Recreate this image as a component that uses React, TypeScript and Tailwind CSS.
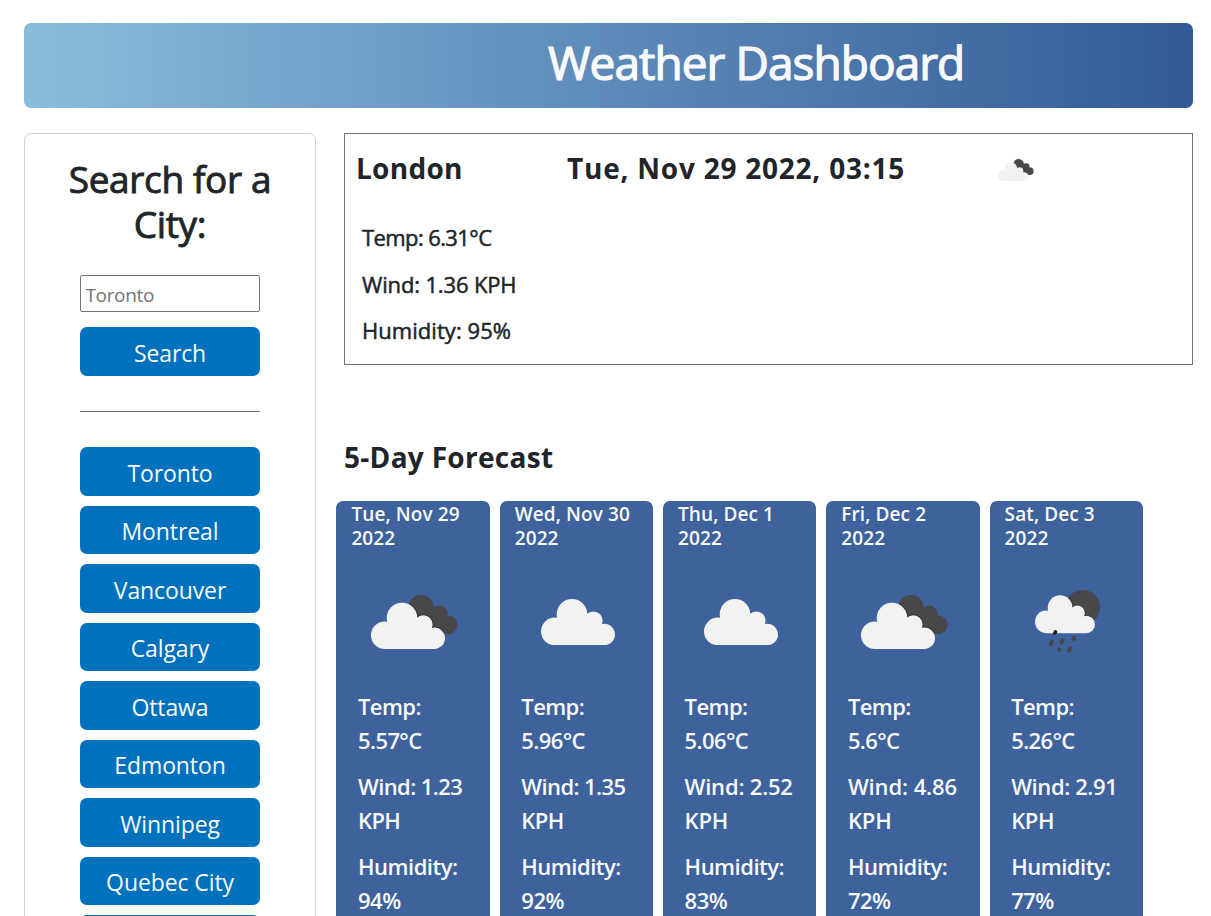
const cities = ["Toronto", "Montreal", "Vancouver", "Calgary", "Ottawa", "Edmonton", "Winnipeg", "Quebec City", "Halifax"];

type Icon = "broken" | "cloud" | "rain";
type Day = { date: string; icon: Icon; temp: string; wind: string; windClass: string; humidity: string };

const days: Day[] = [
  { date: "Tue, Nov 29", icon: "broken", temp: "5.57°C", wind: "1.23", windClass: "tracking-[-0.6px]", humidity: "94%" },
  { date: "Wed, Nov 30", icon: "cloud", temp: "5.96°C", wind: "1.35", windClass: "tracking-[-0.6px]", humidity: "92%" },
  { date: "Thu, Dec 1", icon: "cloud", temp: "5.06°C", wind: "2.52", windClass: "tracking-[-0.2px]", humidity: "83%" },
  { date: "Fri, Dec 2", icon: "broken", temp: "5.6°C", wind: "4.86", windClass: "tracking-[-0.1px]", humidity: "72%" },
  { date: "Sat, Dec 3", icon: "rain", temp: "5.26°C", wind: "2.91", windClass: "tracking-[-0.4px]", humidity: "77%" },
];

function CloudShape() {
  return (
    <>
      <circle cx="13.8" cy="32.4" r="13.8" />
      <circle cx="31" cy="15.3" r="15.3" />
      <circle cx="52.3" cy="21.7" r="9.3" />
      <circle cx="63.3" cy="35.5" r="10.7" />
      <path d="M13.8 46.2H63.3V35L52.3 21.7L31 15L13.8 32Z" />
    </>
  );
}

function WeatherIcon({ kind, className }: { kind: Icon; className: string }) {
  if (kind === "broken")
    return (
      <svg viewBox="0 0 87 54" className={className}>
        <g fill="#48484a">
          <circle cx="50" cy="12.8" r="12.8" />
          <circle cx="68.3" cy="19" r="8.4" />
          <circle cx="77.3" cy="29.8" r="9.3" />
          <path d="M45 14L62 12L78 29.8L74 38L58 34Z" />
        </g>
        <g transform="translate(0 7.8)">
          <g clipPath="url(#cloud-shade)" fill="none" stroke="#1c1c1c" strokeOpacity="0.45" strokeWidth="2">
            <CloudShape />
          </g>
          <g fill="#f2f2f0">
            <CloudShape />
          </g>
        </g>
        <clipPath id="cloud-shade">
          <path d="M39 -8H75V30H60L38 10Z" />
        </clipPath>
      </svg>
    );
  if (kind === "rain")
    return (
      <svg viewBox="0 0 66 64" className={className}>
        <circle cx="47.6" cy="17.4" r="17.4" fill="#48484a" />
        <g transform="translate(0 5.3) scale(0.81 0.82)">
          <g clipPath="url(#sun-shade)" fill="none" stroke="#1c1c1c" strokeOpacity="0.45" strokeWidth="2">
            <CloudShape />
          </g>
          <g fill="#f2f2f2">
            <CloudShape />
          </g>
        </g>
        <clipPath id="sun-shade">
          <path d="M40 -2H72V29H60L40 12Z" />
        </clipPath>
        <g stroke="#48484a" strokeWidth="3.8" strokeLinecap="round">
          <path d="M20.4 42L19.9 43" stroke="#242424" />
          <path d="M17 51.5L15.7 54.5" />
          <path d="M27.7 50L26.4 53" />
          <path d="M39 47.7L38.4 49" />
          <path d="M24.3 59.2L24 59.8" />
          <path d="M35.2 58.3L33.9 61" />
        </g>
      </svg>
    );
  return (
    <svg viewBox="0 0 74 46.2" className={className}>
      <g fill="#f2f2f0">
        <CloudShape />
      </g>
    </svg>
  );
}

const iconClass: Record<Icon, string> = {
  broken: "mt-[46px] ml-[34.6px] h-[54px] w-[87px]",
  cloud: "mt-[50px] ml-[41px] h-[46.2px] w-[74px]",
  rain: "mt-[41px] ml-[45px] h-[64px] w-[66px]",
};

function ForecastCard({ day }: { day: Day }) {
  return (
    <article className="h-[460px] w-[153.3px] shrink-0 rounded-[7px] bg-[#3e629c] text-[#f8f9fa]">
      <h3 className="h-[48px] pt-[2px] pl-[15px] text-[19px] leading-[23.5px] font-semibold tracking-[0.1px] whitespace-nowrap">
        {day.date}
        <br />
        2022
      </h3>
      <div className="flow-root h-[140px]">
        <WeatherIcon kind={day.icon} className={iconClass[day.icon]} />
      </div>
      <div className="flex flex-col gap-[12px] pl-[21.6px] text-[22px] leading-[34px] font-semibold tracking-[-0.6px] whitespace-nowrap">
        <p>Temp:<br />{day.temp}</p>
        <p className={day.windClass}>Wind: {day.wind}<br />KPH</p>
        <p className="tracking-[-0.5px]">Humidity:<br />{day.humidity}</p>
      </div>
    </article>
  );
}

const buttonClass =
  "flex h-[48.5px] w-full shrink-0 items-center justify-center rounded-[7px] bg-[#0071bc] pt-[3px] text-[23px] tracking-[-0.1px] text-[#f8f9fa]";

export default function App() {
  return (
    <div className="h-[916px] w-[1211px] overflow-hidden bg-white px-[24px] pt-[23px] font-['Open_Sans','Noto_Sans',sans-serif] text-[#212529]">
      <header className="h-[85px] w-[1169px] rounded-[7px] bg-linear-to-r from-[#8bbddb] to-[#335a97] pl-[524px]">
        <h1 className="pt-[9px] text-[46px] leading-[60px] tracking-[-0.95px] whitespace-nowrap text-[#f8f9fa] [-webkit-text-stroke:1.2px_#f8f9fa]">Weather Dashboard</h1>
      </header>
      <div className="mt-[25px] flex">
        <aside className="h-[900px] w-[292px] shrink-0 rounded-[7px] border border-[#cfd0d1] px-[55px] pt-[22px]">
          <h2 className="-mx-[20px] text-center text-[37px] leading-[45px] tracking-[-0.35px] [-webkit-text-stroke:0.9px_#212529]">Search for a<br />City:</h2>
          <input
            placeholder="Toronto"
            className="mt-[29px] block h-[37px] w-full rounded-[2px] border border-[#767676] px-[4.5px] pt-[3px] text-[19px] tracking-[-0.35px] placeholder:text-[#757575]"
          />
          <button className={`${buttonClass} mt-[15px]`}>Search</button>
          <hr className="mt-[35.5px] border-[#6c757d]" />
          <div className="mt-[35px] flex flex-col gap-[10px]">
            {cities.map((c) => (
              <button key={c} className={buttonClass}>{c}</button>
            ))}
          </div>
        </aside>
        <main className="ml-[28px] w-[849px] shrink-0">
          <section className="h-[232px] border border-[#6c757d]">
            <div className="flex h-[81px] pt-[16px] pl-[11px] text-[28px] leading-[36px] font-bold whitespace-nowrap">
              <h2 className="w-[211px] tracking-[0.3px]">London</h2>
              <h2 className="w-[431px] tracking-[0.77px]">Tue, Nov 29 2022, 03:15</h2>
              <WeatherIcon kind="broken" className="mt-[9px] h-[22px] w-[36px]" />
            </div>
            <div className="flex flex-col gap-[12.5px] pt-[5px] pl-[17px] text-[22px] leading-[34px] [-webkit-text-stroke:0.5px_#212529]">
              <p className="tracking-[-0.6px]">Temp: 6.31°C</p>
              <p className="tracking-[-0.15px]">Wind: 1.36 KPH</p>
              <p className="tracking-[0.05px]">Humidity: 95%</p>
            </div>
          </section>
          <h2 className="mt-[74px] text-[28px] leading-[36px] font-bold tracking-[0.3px]">5-Day Forecast</h2>
          <div className="mt-[26px] -ml-[7.6px] flex gap-[10px]">
            {days.map((d) => (
              <ForecastCard key={d.date} day={d} />
            ))}
          </div>
        </main>
      </div>
    </div>
  );
}
